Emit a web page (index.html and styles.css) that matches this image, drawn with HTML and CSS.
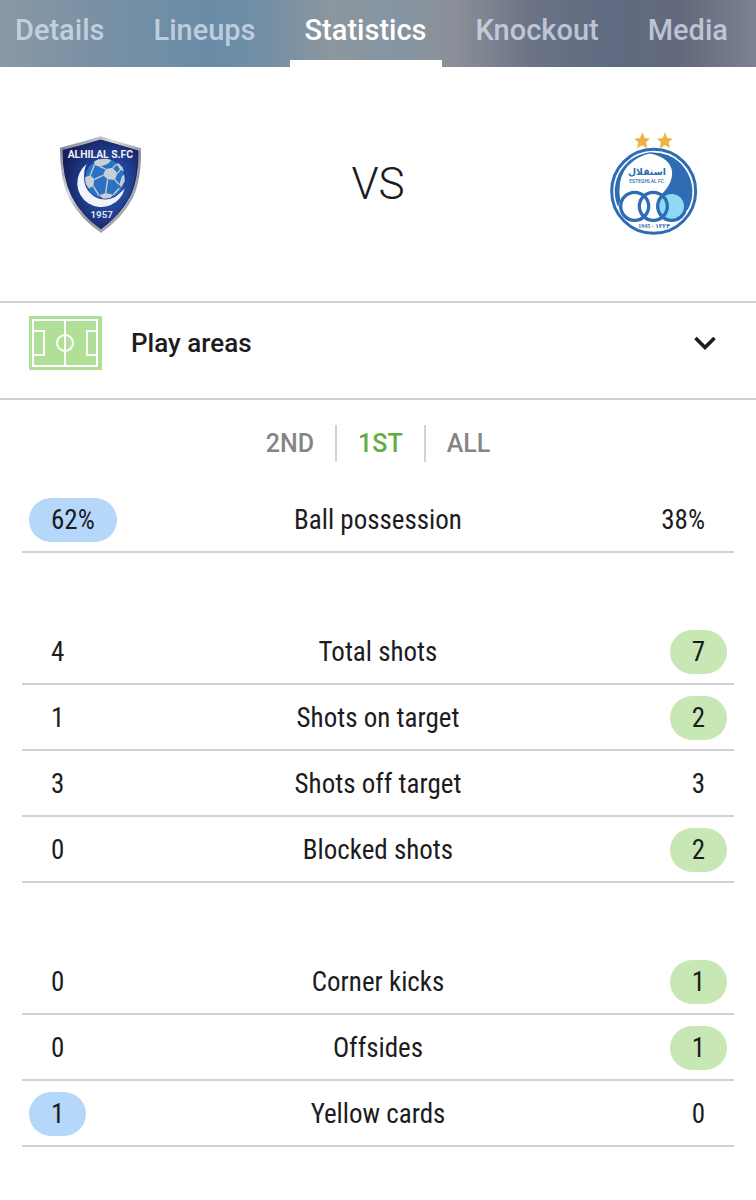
FILE: index.html
```
<!DOCTYPE html>
<html lang="en">

<head>
    <meta charset="UTF-8">
    <meta name="viewport" content="width=device-width, initial-scale=1.0">
    <title>Match statistics</title>
    <link rel="stylesheet" href="styles.css">
</head>

<body>
    <nav class="tabs">
        <a class="tab" href="#details">Details</a>
        <a class="tab" href="#lineups">Lineups</a>
        <a class="tab active" href="#statistics">Statistics</a>
        <a class="tab" href="#knockout">Knockout</a>
        <a class="tab" href="#media">Media</a>
    </nav>

    <main>
        <section class="teams">
            <!-- Al Hilal crest -->
            <svg class="crest" viewBox="0 -3 312 360" role="img" aria-label="Al Hilal">
                <defs>
                    <linearGradient id="silver" x1="0" y1="0" x2="1" y2="1">
                        <stop offset="0" stop-color="#6f7488" />
                        <stop offset="0.35" stop-color="#d9dbe0" />
                        <stop offset="0.6" stop-color="#8d919d" />
                        <stop offset="1" stop-color="#c3c6cc" />
                    </linearGradient>
                    <radialGradient id="navy" cx="0.6" cy="0.5" r="0.6">
                        <stop offset="0" stop-color="#2466b4" />
                        <stop offset="0.55" stop-color="#203f91" />
                        <stop offset="1" stop-color="#17205f" />
                    </radialGradient>
                </defs>
                <path d="M30 68Q95 52 152 34Q210 52 273 70Q275 165 248 220Q216 281 153 324Q90 281 57 220Q29 160 30 68Z" fill="url(#silver)" />
                <path d="M39 76Q98 62 152 45Q208 61 264 78Q264 164 239 214Q208 272 153 311Q96 272 66 214Q39 160 39 76Z" fill="url(#navy)" stroke="#18205a" stroke-width="3" />
                <path d="M110 117A72 72 0 1 0 224 190A68 68 0 0 1 110 117Z" fill="#f1f4fa" />
                <circle cx="165" cy="161" r="61" fill="#2b73c2" stroke="#183a7e" stroke-width="3" />
                <g fill="#c9cfd8">
                    <path d="M133 109L145 103L170 101L184 105L174 116L150 125L133 120Z" />
                    <path d="M167 132L188 128L202 145L195 165L173 163L159 151Z" />
                    <path d="M105 157L121 151L133 163L130 184L116 190L107 176Z" />
                    <path d="M147 211L167 204L190 209L181 219L160 221Z" />
                    <path d="M213 187L224 169L223 149L216 154L208 179Z" />
                    <path d="M205 114L217 127L222 139L211 134L200 118Z" />
                </g>
                <path d="M133 120L121 151M150 125L167 132M188 128L200 118M202 145L211 134M195 165L208 179M173 163L167 204M159 151L133 163M130 184L147 211M190 209L208 190" fill="none" stroke="#c9cfd8" stroke-width="4" />
                <text class="crest-name" x="151" y="98">ALHILAL S.FC</text>
                <text class="crest-year" x="155" y="278">1957</text>
            </svg>
            <span class="versus">VS</span>
            <!-- Esteghlal crest -->
            <svg class="crest" viewBox="6 -3 312 360" role="img" aria-label="Esteghlal">
                <path fill="#f0b23e" d="M127 22L134 39L150 41L138 52L142 70L127 61L111 70L115 52L103 41L120 39ZM195 22L202 39L218 41L206 52L210 70L195 61L179 70L183 52L171 41L188 39Z" />
                <circle cx="161" cy="199" r="126" fill="#fff" stroke="#2e6db4" stroke-width="9" />
                <path fill="#2e6db4" d="M140 84A117 117 0 0 1 263 255L217 244L178 215Q226 170 214 130Q201 92 140 84Z" />
                <path fill="#2e6db4" d="M161 82A117 117 0 0 0 54 246L61 226Q42 110 161 82Z" />
                <circle cx="160" cy="244" r="42" fill="#fff" />
                <circle cx="215" cy="244" r="42" fill="#8ed9f4" />
                <g fill="none" stroke="#2e6db4" stroke-width="10">
                    <circle cx="104" cy="244" r="42" />
                    <circle cx="160" cy="244" r="42" />
                    <circle cx="215" cy="244" r="42" />
                </g>
                <text class="crest-arabic" x="141" y="150">استقلال</text>
                <text class="crest-latin" x="142" y="175">ESTEGHLAL FC.</text>
                <text class="crest-founded" x="162" y="308">1945 - ۱۳۲۴</text>
            </svg>
        </section>

        <button class="play-areas" type="button">
            <svg class="pitch" viewBox="0 0 74 56" aria-hidden="true">
                <path fill="#b0df98" d="M1 1h73v54H1z" />
                <path fill="none" stroke="#fff" stroke-width="2" d="M5 5h64v46H5zM37 5v46M5 16h11v24H5M69 16H59v24h10" />
                <circle cx="37" cy="28" r="8" fill="none" stroke="#fff" stroke-width="2" />
            </svg>
            <span class="play-label">Play areas</span>
            <svg class="chevron" viewBox="0 0 24 16" aria-hidden="true">
                <path fill="none" stroke="#1c1c1e" stroke-width="3.6" d="M2.5 3L12 12.500L21.500 3" />
            </svg>
        </button>

        <div class="periods">
            <button class="period" type="button">2ND</button>
            <button class="period selected" type="button">1ST</button>
            <button class="period" type="button">ALL</button>
        </div>

        <div class="stats">
            <table>
                <tr>
                    <td><span class="value home">62%</span></td>
                    <th scope="row">Ball possession</th>
                    <td><span class="value">38%</span></td>
                </tr>
            </table>

            <table>
                <tr>
                    <td><span class="value">4</span></td>
                    <th scope="row">Total shots</th>
                    <td><span class="value away">7</span></td>
                </tr>
                <tr>
                    <td><span class="value">1</span></td>
                    <th scope="row">Shots on target</th>
                    <td><span class="value away">2</span></td>
                </tr>
                <tr>
                    <td><span class="value">3</span></td>
                    <th scope="row">Shots off target</th>
                    <td><span class="value">3</span></td>
                </tr>
                <tr>
                    <td><span class="value">0</span></td>
                    <th scope="row">Blocked shots</th>
                    <td><span class="value away">2</span></td>
                </tr>
            </table>

            <table>
                <tr>
                    <td><span class="value">0</span></td>
                    <th scope="row">Corner kicks</th>
                    <td><span class="value away">1</span></td>
                </tr>
                <tr>
                    <td><span class="value">0</span></td>
                    <th scope="row">Offsides</th>
                    <td><span class="value away">1</span></td>
                </tr>
                <tr>
                    <td><span class="value home">1</span></td>
                    <th scope="row">Yellow cards</th>
                    <td><span class="value">0</span></td>
                </tr>
            </table>
        </div>
    </main>
</body>

</html>
```
FILE: styles.css
```
* {
    box-sizing: border-box;
}

body {
    font-family: Roboto, Arial, sans-serif;
    margin: 0;
    color: #1c1c1e;
    background-color: #fff;
}

button {
    font-family: inherit;
    color: inherit;
    background: none;
    border: none;
    padding: 0;
    cursor: pointer;
}

.tabs {
    display: flex;
    gap: 19px;
    height: 67px;
    background: linear-gradient(90deg, #8a99a5 0%, #7890a4 13%, #6a8ca7 28%, #728fa5 35%, #8c979f 44%, #8595a2 52%, #8b9099 60%, #6c7486 70%, #5f6b81 80%, #63697c 90%, #7c8290 100%);
}

.tab {
    padding: 13px 15px 0;
    font-size: 29px;
    line-height: 34px;
    font-weight: 500;
    color: rgba(223, 230, 245, 0.72);
    text-decoration: none;
    border-bottom: 7px solid transparent;
}

.tab.active {
    color: #fff;
    border-bottom-color: #fff;
}

.teams {
    display: flex;
    justify-content: space-between;
    align-items: center;
    height: 236px;
    padding: 0 50px;
    border-bottom: 2px solid #d2d2d2;
}

.crest {
    width: 104px;
    height: 120px;
}

.crest text {
    text-anchor: middle;
}

.crest-name {
    font-size: 31px;
    font-weight: 700;
    fill: #eef0f6;
}

.crest-year {
    font-size: 29px;
    font-weight: 700;
    fill: #dfe3ee;
}

.crest-arabic {
    font-family: "DejaVu Sans", sans-serif;
    font-size: 28px;
    font-weight: 700;
    fill: #2e6db4;
}

.crest-latin {
    font-size: 15px;
    font-weight: 500;
    fill: #2e6db4;
}

.crest-founded {
    font-family: "Liberation Serif", "DejaVu Sans", serif;
    font-size: 18px;
    font-weight: 700;
    fill: #2e6db4;
}

.versus {
    font-size: 44px;
    font-weight: 300;
}

.play-areas {
    display: flex;
    align-items: center;
    width: 100%;
    padding: 12px 39px 27px 28px;
    border-bottom: 2px solid #d2d2d2;
}

.pitch {
    width: 74px;
    height: 56px;
}

.play-label {
    flex: 1;
    margin-left: 29px;
    font-size: 26px;
    line-height: 32px;
    font-weight: 500;
    text-align: left;
}

.chevron {
    width: 24px;
    height: 16px;
}

.periods {
    display: flex;
    justify-content: center;
    padding: 25px 0;
}

.period {
    height: 37px;
    padding: 0 21px;
    font-size: 25px;
    font-weight: 500;
    color: #858585;
}

.period + .period {
    border-left: 2px solid #d2d2d2;
}

.period.selected {
    color: #62ac42;
}

.stats {
    padding: 0 22px 55px;
}

table {
    width: 100%;
    table-layout: fixed;
    border-collapse: separate;
    border-spacing: 0;
    font-family: "Roboto Condensed", "Liberation Sans Narrow", Roboto, sans-serif;
    font-size: 27px;
}

table + table {
    margin-top: 66px;
}

td,
th {
    height: 66px;
    padding: 2px 7px 0;
    border-bottom: 2px solid #d2d2d2;
    font-weight: 400;
}

th {
    width: 50%;
    text-align: center;
}

td:last-child {
    text-align: right;
}

.value {
    display: inline-block;
    padding: 0 22px;
    line-height: 44px;
    border-radius: 22px;
    vertical-align: middle;
}

.home {
    background-color: #b5d7fa;
}

.away {
    background-color: #c7e8b4;
}
```
